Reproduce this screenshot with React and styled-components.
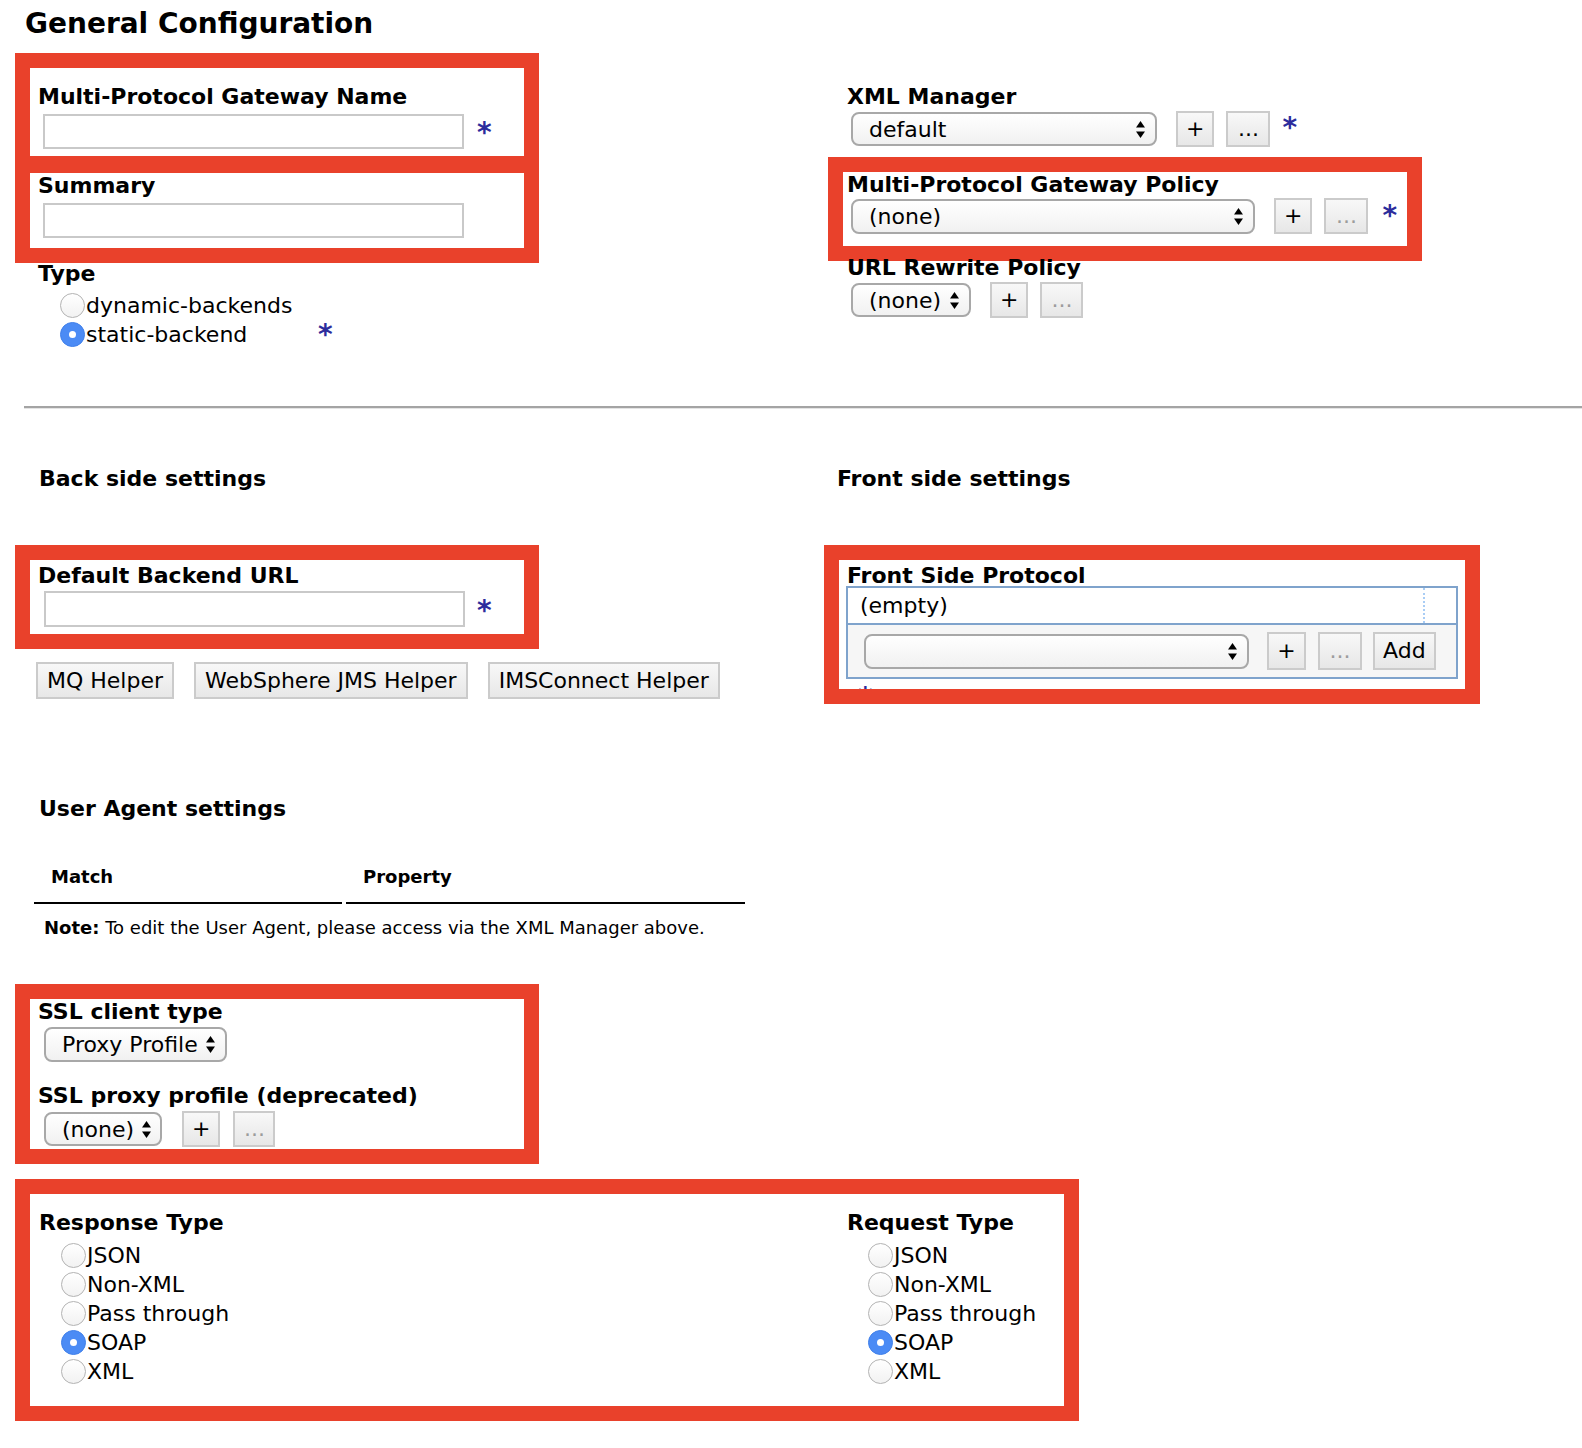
import React from "react";
import styled, { createGlobalStyle, css } from "styled-components";

const GlobalStyle = createGlobalStyle`
  html, body {
    margin: 0;
    padding: 0;
    background: #fff;
  }
  body {
    font-family: "DejaVu Sans", Verdana, sans-serif;
    color: #000;
  }
`;

const RED = "#e9412b";

const Page = styled.div`
  width: 1582px;
  box-sizing: border-box;
  padding: 8px 0 40px 15px;
`;

const Title = styled.h1`
  margin: 0 0 13px 10px;
  font-size: 28px;
  line-height: 32px;
  font-weight: bold;
`;

const TwoCol = styled.div`
  display: grid;
  grid-template-columns: 809px 1fr;
  align-items: start;
  margin-top: ${(p) => p.$mt || 0}px;
`;

const Stack = styled.div`
  display: flex;
  flex-direction: column;
  align-items: flex-start;
`;

const Highlight = styled.div`
  box-sizing: border-box;
  width: ${(p) => p.$w}px;
  margin-left: ${(p) => p.$x || 0}px;
  margin-top: ${(p) => p.$mt || 0}px;
  border: 15px solid ${RED};
  background: #fff;
`;

const RedGap = styled.div`
  height: 17px;
  background: ${RED};
`;

const Bare = styled.div`
  padding: 0 15px;
  margin-top: ${(p) => p.$mt || 0}px;
`;

const Field = styled.div`
  padding: ${(p) => p.$pt || 0}px 0 ${(p) => p.$pb || 0}px ${(p) => p.$pl ?? 8}px;
  margin-top: ${(p) => p.$mt || 0}px;
`;

const Label = styled.div`
  margin-top: ${(p) => p.$mt || 0}px;
  font-size: 22px;
  line-height: 26px;
  font-weight: bold;
  white-space: nowrap;
`;

const Heading = styled.h3`
  margin: ${(p) => p.$mt || 0}px 0 0 ${(p) => p.$ml || 0}px;
  font-size: 22px;
  line-height: 26px;
  font-weight: bold;
  white-space: nowrap;
`;

const Row = styled.div`
  display: flex;
  align-items: center;
  height: 36px;
  margin-top: ${(p) => p.$mt || 0}px;
  margin-left: ${(p) => p.$ml ?? 4}px;
`;

const TextInput = styled.input`
  box-sizing: border-box;
  width: 421px;
  height: ${(p) => p.$h || 35}px;
  margin: 0 0 0 1px;
  padding: 0 6px;
  border: 2px solid #c9c9c9;
  background: #fff;
  font-family: inherit;
  font-size: 22px;
  outline: none;
`;

const SelectBox = styled.div`
  box-sizing: border-box;
  display: inline-flex;
  align-items: center;
  justify-content: space-between;
  flex: none;
  width: ${(p) => p.$w}px;
  height: ${(p) => p.$h || 34}px;
  padding: 0 10px 0 16px;
  border: 2px solid #a8a8a8;
  border-radius: 8px;
  background: linear-gradient(#ffffff, #f1f1f1);
  font-size: 22px;
  white-space: nowrap;
`;

const Arrows = styled.svg`
  flex: none;
  margin-left: 8px;
`;

const Btn = styled.button`
  box-sizing: border-box;
  display: inline-flex;
  align-items: center;
  justify-content: center;
  flex: none;
  min-width: ${(p) => p.$w || 0}px;
  height: ${(p) => p.$h || 36}px;
  margin: 0 0 0 ${(p) => p.$gap ?? 12}px;
  padding: 0 8px;
  border: 2px solid #cbcbcb;
  border-radius: 0;
  background: linear-gradient(#f8f8f8, #e7e7e7);
  font-family: inherit;
  font-size: 22px;
  line-height: 1;
  color: ${(p) => (p.disabled ? "#9c9c9c" : "#000")};
`;

const Req = styled.span`
  display: block;
  flex: none;
  align-self: ${(p) => p.$align || "flex-start"};
  margin: ${(p) => p.$mt || 0}px 0 0 ${(p) => p.$gap ?? 12}px;
  color: #2c2c9c;
  font-weight: bold;
  font-size: 28px;
  line-height: 28px;
`;

const RadioWrap = styled.div`
  display: flex;
  margin: ${(p) => p.$mt || 0}px 0 0 ${(p) => p.$ml ?? 22}px;
`;

const RadioList = styled.div`
  display: flex;
  flex-direction: column;
  width: ${(p) => (p.$w ? `${p.$w}px` : "auto")};
`;

const RadioRow = styled.label`
  display: flex;
  align-items: center;
  height: 29px;
  font-size: 22px;
  white-space: nowrap;
`;

const RadioDot = styled.span`
  position: relative;
  box-sizing: border-box;
  flex: none;
  width: 25px;
  height: 25px;
  margin-right: 1px;
  border-radius: 50%;
  ${(p) =>
    p.$on
      ? css`
          background: #4b8bf5;
          border: 1px solid #4080ea;
          &::after {
            content: "";
            position: absolute;
            left: 50%;
            top: 50%;
            width: 7px;
            height: 7px;
            margin: -3.5px 0 0 -3.5px;
            border-radius: 50%;
            background: #fff;
          }
        `
      : css`
          background: linear-gradient(#ffffff, #f2f2f2);
          border: 1px solid #b3b3b3;
        `}
`;

const Rule = styled.hr`
  box-sizing: border-box;
  width: calc(100% - 9px);
  height: 3px;
  margin: 57px 0 0 9px;
  border: none;
  border-top: 2px solid #a4a4a4;
  border-bottom: 1px solid #e4e4e4;
`;

const HelperRow = styled.div`
  display: flex;
  gap: 20px;
  margin: 13px 0 0 21px;
`;

const HelperBtn = styled(Btn)`
  height: 37px;
  margin: 0;
  padding: 0 9px;
`;

const FsTable = styled.div`
  box-sizing: border-box;
  width: 612px;
  margin: -3px 0 0 -1px;
  border: 2px solid #7fa3cc;
`;

const FsRowTop = styled.div`
  display: grid;
  grid-template-columns: 1fr 33px;
  height: 35px;
  border-bottom: 2px solid #7fa3cc;
  font-size: 22px;
  line-height: 35px;
`;

const FsCell = styled.div`
  padding-left: ${(p) => p.$pl || 0}px;
  border-left: ${(p) => (p.$dotted ? "2px dotted #a9cdf5" : "none")};
`;

const FsRowBottom = styled.div`
  display: flex;
  align-items: center;
  height: 52px;
  padding-left: 16px;
  background: #f6f6f6;
`;

const Clip = styled.div`
  height: 10px;
  overflow: hidden;
`;

const UATable = styled.table`
  border-collapse: separate;
  border-spacing: 4px 0;
  margin: 30px 0 0 15px;
`;

const UAHead = styled.th`
  width: ${(p) => p.$w}px;
  box-sizing: border-box;
  padding: 14px 0 14px 17px;
  border-bottom: 2px solid #000;
  text-align: left;
  font-size: 18px;
  line-height: 22px;
  font-weight: bold;
`;

const Note = styled.p`
  margin: 13px 0 0 29px;
  font-size: 18px;
  line-height: 22px;
  white-space: nowrap;
`;

const TypeGrid = styled.div`
  display: grid;
  grid-template-columns: 809px 1fr;
  padding: 16px 0 20px;
`;

const SelectArrows = () => (
  <Arrows width="9" height="17" viewBox="0 0 9 17">
    <path d="M4.5 0 L9 6.5 L0 6.5 Z" fill="#000" />
    <path d="M0 10.5 L9 10.5 L4.5 17 Z" fill="#000" />
  </Arrows>
);

const Select = ({ value = "", w, h }) => (
  <SelectBox $w={w} $h={h}>
    <span>{value}</span>
    <SelectArrows />
  </SelectBox>
);

const Radios = ({ items, checked, w }) => (
  <RadioList $w={w}>
    {items.map((item) => (
      <RadioRow key={item}>
        <RadioDot $on={item === checked} />
        {item}
      </RadioRow>
    ))}
  </RadioList>
);

const TYPES = ["JSON", "Non-XML", "Pass through", "SOAP", "XML"];

export default function App() {
  return (
    <Page>
      <GlobalStyle />
      <Title>General Configuration</Title>

      <TwoCol>
        <Stack>
          <Highlight $w={524}>
            <Field $pt={16} $pb={7}>
              <Label>Multi-Protocol Gateway Name</Label>
              <Row $mt={3} $ml={4}>
                <TextInput />
                <Req $mt={6} $gap={13}>*</Req>
              </Row>
            </Field>
            <RedGap />
            <Field $pb={10}>
              <Label>Summary</Label>
              <Row $mt={3} $ml={4}>
                <TextInput />
              </Row>
            </Field>
          </Highlight>
          <Bare $mt={-2}>
            <Field>
              <Label>Type</Label>
              <RadioWrap $mt={4} $ml={22}>
                <Radios items={["dynamic-backends", "static-backend"]} checked="static-backend" w={258} />
                <Req $align="flex-end" $gap={0}>*</Req>
              </RadioWrap>
            </Field>
          </Bare>
        </Stack>

        <Stack>
          <Bare $mt={31}>
            <Field>
              <Label>XML Manager</Label>
              <Row $mt={1}>
                <Select value="default" w={306} />
                <Btn $w={38} $gap={19}>+</Btn>
                <Btn $w={44}>...</Btn>
                <Req $mt={3}>*</Req>
              </Row>
            </Field>
          </Bare>
          <Highlight $w={594} $x={4} $mt={10}>
            <Field $pl={4} $pb={12}>
              <Label>Multi-Protocol Gateway Policy</Label>
              <Row>
                <Select value="(none)" w={404} h={35} />
                <Btn $w={38} $gap={19}>+</Btn>
                <Btn $w={44} disabled>...</Btn>
                <Req $mt={4} $gap={14}>*</Req>
              </Row>
            </Field>
          </Highlight>
          <Bare $mt={-6}>
            <Field>
              <Label>URL Rewrite Policy</Label>
              <Row $mt={1}>
                <Select value="(none)" w={120} />
                <Btn $w={38} $gap={19}>+</Btn>
                <Btn $w={43} disabled>...</Btn>
              </Row>
            </Field>
          </Bare>
        </Stack>
      </TwoCol>

      <Rule />

      <TwoCol $mt={57}>
        <Stack>
          <Heading $ml={24}>Back side settings</Heading>
          <Highlight $w={524} $mt={53}>
            <Field $pt={3} $pb={7}>
              <Label>Default Backend URL</Label>
              <Row $mt={2} $ml={5}>
                <TextInput $h={36} />
                <Req $mt={6} $gap={12}>*</Req>
              </Row>
            </Field>
          </Highlight>
          <HelperRow>
            <HelperBtn>MQ Helper</HelperBtn>
            <HelperBtn>WebSphere JMS Helper</HelperBtn>
            <HelperBtn>IMSConnect Helper</HelperBtn>
          </HelperRow>

          <Heading $ml={24} $mt={97}>User Agent settings</Heading>
          <UATable>
            <thead>
              <tr>
                <UAHead $w={308}>Match</UAHead>
                <UAHead $w={399}>Property</UAHead>
              </tr>
            </thead>
          </UATable>
          <Note>
            <b>Note:</b> To edit the User Agent, please access via the XML Manager above.
          </Note>

          <Highlight $w={524} $mt={45}>
            <Field $pb={2}>
              <Label>SSL client type</Label>
              <Row $mt={1} $ml={6}>
                <Select value="Proxy Profile" w={183} h={35} />
              </Row>
              <Label $mt={21}>SSL proxy profile (deprecated)</Label>
              <Row $mt={2} $ml={6}>
                <Select value="(none)" w={118} />
                <Btn $w={38} $gap={20}>+</Btn>
                <Btn $w={42} $gap={13} disabled>...</Btn>
              </Row>
            </Field>
          </Highlight>
        </Stack>

        <Stack>
          <Heading $ml={13}>Front side settings</Heading>
          <Highlight $w={656} $mt={53}>
            <Field $pt={3}>
              <Label>Front Side Protocol</Label>
              <FsTable>
                <FsRowTop>
                  <FsCell $pl={12}>(empty)</FsCell>
                  <FsCell $dotted />
                </FsRowTop>
                <FsRowBottom>
                  <Select w={385} h={35} />
                  <Btn $w={39} $h={38} $gap={18}>+</Btn>
                  <Btn $w={44} $h={38} disabled>...</Btn>
                  <Btn $w={62} $h={38} $gap={11}>Add</Btn>
                </FsRowBottom>
              </FsTable>
              <Clip>
                <Req $mt={5} $gap={11}>*</Req>
              </Clip>
            </Field>
          </Highlight>
        </Stack>
      </TwoCol>

      <Highlight $w={1064} $mt={15}>
        <TypeGrid>
          <Field $pl={9}>
            <Label>Response Type</Label>
            <RadioWrap $mt={5}>
              <Radios items={TYPES} checked="SOAP" />
            </RadioWrap>
          </Field>
          <Field>
            <Label>Request Type</Label>
            <RadioWrap $mt={5} $ml={21}>
              <Radios items={TYPES} checked="SOAP" />
            </RadioWrap>
          </Field>
        </TypeGrid>
      </Highlight>
    </Page>
  );
}
